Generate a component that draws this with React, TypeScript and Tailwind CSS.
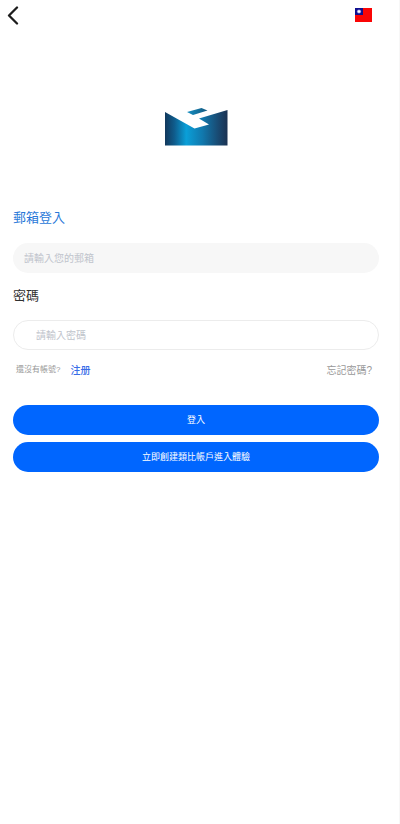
import React from 'react';

function BackIcon() {
  return (
    <svg width="12" height="20" viewBox="0 0 12 20" fill="none" aria-hidden="true">
      <path d="M10 2.5 L2 10.5 L10 18.5" stroke="#1c1c1c" strokeWidth="2.3" strokeLinecap="round" strokeLinejoin="round" />
    </svg>
  );
}

function FlagIcon() {
  return (
    <svg width="17" height="14" viewBox="0 0 17 14" aria-hidden="true">
      <rect width="17" height="14" fill="#fa0505" />
      <rect width="8" height="7" fill="#10108f" />
      <circle cx="4" cy="3.5" r="2.1" fill="#8f8fe0" />
      <circle cx="4" cy="3.5" r="1.3" fill="#fff" />
    </svg>
  );
}

function Logo() {
  return (
    <svg width="64" height="40" viewBox="0 0 64 40" aria-hidden="true">
      <defs>
        <linearGradient id="envelope" x1="0" y1="0" x2="1" y2="0">
          <stop offset="0" stopColor="#12385c" />
          <stop offset="0.15" stopColor="#0f5c8c" />
          <stop offset="0.34" stopColor="#0a9fd8" />
          <stop offset="0.6" stopColor="#1178ad" />
          <stop offset="0.85" stopColor="#194a72" />
          <stop offset="1" stopColor="#1b3252" />
        </linearGradient>
        <linearGradient id="flap" x1="0" y1="0" x2="1" y2="0">
          <stop offset="0" stopColor="#168fc2" />
          <stop offset="1" stopColor="#14587f" />
        </linearGradient>
      </defs>
      <path d="M1 5 L30.5 21.5 L45 17.5 L35 11.5 L63.5 3 L63.5 38.5 L1 38.5 Z" fill="url(#envelope)" />
      <path d="M23 5 L37.5 1 L43.5 3.5 L29 8 Z" fill="url(#flap)" />
    </svg>
  );
}

export default function App(): React.ReactElement {
  return (
    <div
      lang="zh-Hant"
      className="min-h-screen border-r border-[#f7f7f7] bg-white font-['Liberation_Sans','Noto_Sans_CJK_TC',sans-serif]"
    >
      <header className="flex h-[30px] items-center justify-between pl-[7px] pr-[27px]">
        <button type="button" aria-label="返回" className="flex">
          <BackIcon />
        </button>
        <button type="button" aria-label="語言" className="flex">
          <FlagIcon />
        </button>
      </header>

      <main className="pl-[13px] pr-5">
        <div className="flex justify-center pt-[77px]">
          <Logo />
        </div>

        <form className="flex flex-col pt-[61px]">
          <label htmlFor="email" className="text-[13px] leading-5 text-[#2878d8]">
            郵箱登入
          </label>
          <input
            id="email"
            type="email"
            placeholder="請輸入您的郵箱"
            className="mt-[15px] h-[30px] w-full rounded-full bg-[#f7f7f7] px-[11px] text-[10px] outline-none placeholder:text-[#c0c4cc]"
          />

          <label htmlFor="password" className="mt-[13px] text-[13px] leading-5 text-[#303030]">
            密碼
          </label>
          <input
            id="password"
            type="password"
            placeholder="請輸入密碼"
            className="mt-3.5 h-[30px] w-full rounded-full border border-[#ececec] px-[22px] text-[10px] outline-none placeholder:text-[#c0c4cc]"
          />

          <div className="mt-2.5 flex h-5 items-center justify-between pl-[3px] pr-[7px]">
            <p className="flex items-center gap-2.5 text-[8px] text-[#999]">
              還沒有帳號?
              <a href="#register" className="text-[10px] font-medium text-[#3a6ee8]">
                注册
              </a>
            </p>
            <a href="#forgot" className="text-[10px] text-[#999]">
              忘記密碼?
            </a>
          </div>

          <button type="submit" className="mt-[25px] h-[30px] rounded-full bg-[#0066ff] pt-px text-[9px] text-white">
            登入
          </button>
          <button type="button" className="mt-[7px] h-[30px] rounded-full bg-[#0066ff] pt-px text-[9px] text-white">
            立即創建類比帳戶進入體驗
          </button>
        </form>
      </main>
    </div>
  );
}
